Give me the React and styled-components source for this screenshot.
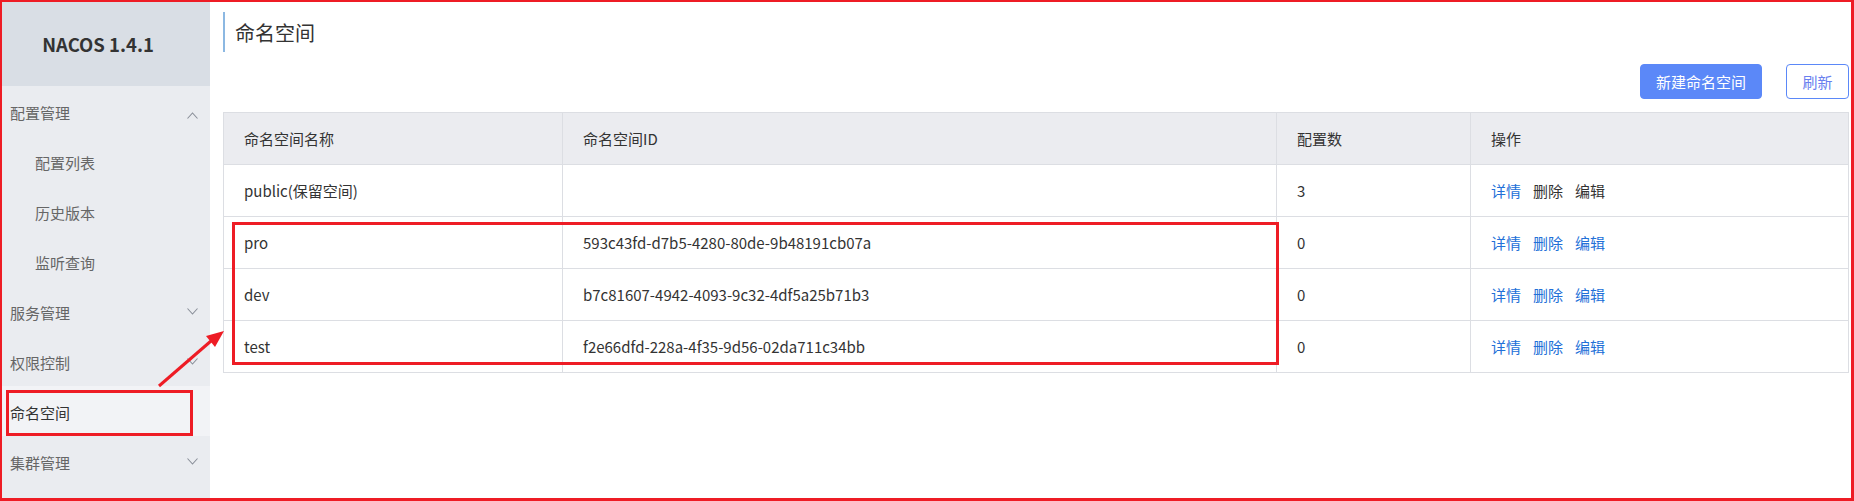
import React from "react";
import styled, { createGlobalStyle } from "styled-components";

const GlobalStyle = createGlobalStyle`
  body {
    margin: 0;
    background: #fff;
    font-family: "Noto Sans CJK SC", "Noto Sans", sans-serif;
  }
`;

const Frame = styled.div`
  position: relative;
  width: 1854px;
  height: 501px;
  box-sizing: border-box;
  border: 2px solid #ee1c25;
  border-right-width: 3px;
  border-bottom-width: 3px;
  display: flex;
  overflow: hidden;
`;

const Sidebar = styled.aside`
  width: 208px;
  flex-shrink: 0;
  background: #eaecf0;
  display: flex;
  flex-direction: column;
`;

const Logo = styled.div`
  height: 84px;
  background: #d9dee5;
  display: flex;
  align-items: center;
  justify-content: center;
  font-size: 18.5px;
  font-weight: 700;
  color: #333;
  padding-right: 16px;
`;

const MenuItem = styled.div`
  position: relative;
  height: 50px;
  display: flex;
  align-items: center;
  justify-content: space-between;
  padding: 3px 12px 0 ${(p) => (p.$sub ? "33px" : "8px")};
  box-sizing: border-box;
  font-size: 15px;
  color: ${(p) => (p.$active ? "#333" : "#666")};
  background: ${(p) => (p.$active ? "#f2f3f6" : "transparent")};
`;

const Chevron = styled.svg`
  width: 11px;
  height: 7px;
  margin-top: ${(p) => (p.$up ? "6px" : "-2px")};
`;

const Mark = styled.div`
  position: absolute;
  border: 3px solid #ee1c25;
  box-sizing: border-box;
  pointer-events: none;
`;

const NavMark = styled(Mark)`
  left: 4px;
  top: 4px;
  width: 187px;
  height: 46px;
`;

const Main = styled.main`
  flex: 1;
  padding: 10px 2px 0 13px;
  display: flex;
  flex-direction: column;
`;

const Title = styled.h1`
  margin: 0;
  height: 40px;
  border-left: 2px solid #8cb8e2;
  padding-left: 10px;
  display: flex;
  align-items: center;
  font-size: 20px;
  font-weight: 400;
  color: #333;
`;

const Toolbar = styled.div`
  display: flex;
  justify-content: flex-end;
  gap: 24px;
  margin: 12px 0 13px;
`;

const Button = styled.button`
  height: 35px;
  padding: 0 ${(p) => (p.$primary ? "13px" : "12px")};
  border-radius: 4px;
  border: 1px solid #5b88f8;
  background: ${(p) => (p.$primary ? "#5b88f8" : "#fff")};
  color: ${(p) => (p.$primary ? "#fff" : "#6a7fef")};
  font-family: inherit;
  font-size: 15px;
  min-width: ${(p) => (p.$primary ? "122px" : "63px")};
`;

const Table = styled.div`
  position: relative;
  border: 1px solid #dcdee3;
  border-bottom: none;
  width: 1626px;
  box-sizing: border-box;
`;

const Row = styled.div`
  display: grid;
  grid-template-columns: 339px 714px 194px 377px;
  height: 52px;
  box-sizing: border-box;
  border-bottom: 1px solid #dcdee3;
  background: ${(p) => (p.$head ? "#ebecf0" : "#fff")};
`;

const Cell = styled.div`
  display: flex;
  align-items: center;
  gap: 12px;
  padding: 0 20px;
  font-size: 15px;
  color: #333;
  border-right: 1px solid #dcdee3;
  &:last-child {
    border-right: none;
  }
`;

const Action = styled.span`
  color: ${(p) => (p.$disabled ? "#333" : "#2270d8")};
`;

const RowsMark = styled(Mark)`
  left: 8px;
  top: 109px;
  width: 1047px;
  height: 143px;
`;

const Arrow = styled.svg`
  position: absolute;
  left: 148px;
  top: 318px;
  width: 80px;
  height: 75px;
  pointer-events: none;
`;

const menu = [
  { label: "配置管理", chevron: "up" },
  { label: "配置列表", sub: true },
  { label: "历史版本", sub: true },
  { label: "监听查询", sub: true },
  { label: "服务管理", chevron: "down" },
  { label: "权限控制", chevron: "down" },
  { label: "命名空间", active: true },
  { label: "集群管理", chevron: "down" },
];

const namespaces = [
  { name: "public(保留空间)", id: "", count: 3, locked: true },
  { name: "pro", id: "593c43fd-d7b5-4280-80de-9b48191cb07a", count: 0 },
  { name: "dev", id: "b7c81607-4942-4093-9c32-4df5a25b71b3", count: 0 },
  { name: "test", id: "f2e66dfd-228a-4f35-9d56-02da711c34bb", count: 0 },
];

const ChevronIcon = ({ up }) => (
  <Chevron $up={up} viewBox="0 0 11 7" fill="none" stroke="#8a8f99" strokeWidth="1.1">
    <path d={up ? "M0.5 6.5 L5.5 1 L10.5 6.5" : "M0.5 0.5 L5.5 6 L10.5 0.5"} />
  </Chevron>
);

export default function App() {
  return (
    <>
      <GlobalStyle />
      <Frame>
        <Sidebar>
          <Logo>NACOS 1.4.1</Logo>
          {menu.map((item) => (
            <MenuItem key={item.label} $sub={item.sub} $active={item.active}>
              <span>{item.label}</span>
              {item.chevron && <ChevronIcon up={item.chevron === "up"} />}
              {item.active && <NavMark />}
            </MenuItem>
          ))}
        </Sidebar>
        <Main>
          <Title>命名空间</Title>
          <Toolbar>
            <Button $primary>新建命名空间</Button>
            <Button>刷新</Button>
          </Toolbar>
          <Table>
            <Row $head>
              <Cell>命名空间名称</Cell>
              <Cell>命名空间ID</Cell>
              <Cell>配置数</Cell>
              <Cell>操作</Cell>
            </Row>
            {namespaces.map((ns) => (
              <Row key={ns.name}>
                <Cell>{ns.name}</Cell>
                <Cell>{ns.id}</Cell>
                <Cell>{ns.count}</Cell>
                <Cell>
                  <Action>详情</Action>
                  <Action $disabled={ns.locked}>删除</Action>
                  <Action $disabled={ns.locked}>编辑</Action>
                </Cell>
              </Row>
            ))}
            <RowsMark />
          </Table>
        </Main>
        <Arrow viewBox="0 0 80 75">
          <line x1="9" y1="66" x2="61" y2="21" stroke="#ee1c25" strokeWidth="3" />
          <polygon points="74,11 65,27 56,16" fill="#ee1c25" />
        </Arrow>
      </Frame>
    </>
  );
}
